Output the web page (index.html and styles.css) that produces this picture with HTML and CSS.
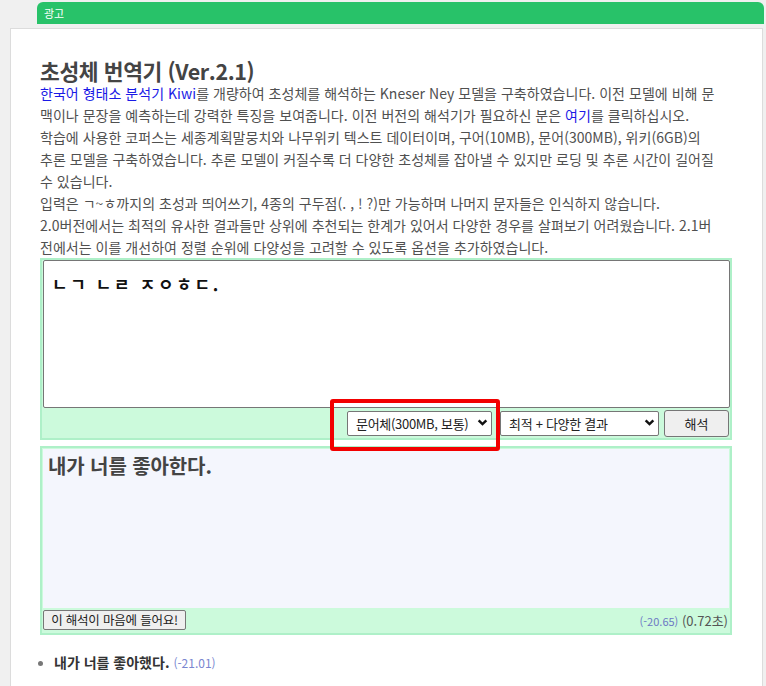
FILE: index.html
```html
<!DOCTYPE html>
<html lang="ko">
<head>
<meta charset="utf-8">
<title>초성체 번역기</title>
<link rel="stylesheet" href="styles.css">
</head>
<body>
<div class="ad">광고</div>
<main class="card">
  <h1 class="title">초성체 번역기 (Ver.2.1)</h1>
  <p class="desc"><a href="#">한국어 형태소 분석기 Kiwi</a>를 개량하여 초성체를 해석하는 Kneser Ney 모델을 구축하였습니다. 이전 모델에 비해 문<br>맥이나 문장을 예측하는데 강력한 특징을 보여줍니다. 이전 버전의 해석기가 필요하신 분은 <a href="#">여기</a>를 클릭하십시오.<br>학습에 사용한 코퍼스는 세종계획말뭉치와 나무위키 텍스트 데이터이며, 구어(10MB), 문어(300MB), 위키(6GB)의<br>추론 모델을 구축하였습니다. 추론 모델이 커질수록 더 다양한 초성체를 잡아낼 수 있지만 로딩 및 추론 시간이 길어질<br>수 있습니다.<br>입력은 ㄱ~ㅎ까지의 초성과 띄어쓰기, 4종의 구두점(. , ! ?)만 가능하며 나머지 문자들은 인식하지 않습니다.<br>2.0버전에서는 최적의 유사한 결과들만 상위에 추천되는 한계가 있어서 다양한 경우를 살펴보기 어려웠습니다. 2.1버<br>전에서는 이를 개선하여 정렬 순위에 다양성을 고려할 수 있도록 옵션을 추가하였습니다.</p>

  <section class="input-box">
    <textarea class="input">ㄴㄱ ㄴㄹ ㅈㅇㅎㄷ.</textarea>
    <div class="controls">
      <div class="select-wrap model">
        <select class="select"><option>문어체(300MB, 보통)</option></select>
        <svg class="chev" viewBox="0 0 10 10" width="11" height="11"><path d="M1.5 3 L5 6.5 L8.5 3" fill="none" stroke="#111" stroke-width="2.2"/></svg>
        <div class="highlight"></div>
      </div>
      <div class="select-wrap mode">
        <select class="select"><option>최적 + 다양한 결과</option></select>
        <svg class="chev" viewBox="0 0 10 10" width="11" height="11"><path d="M1.5 3 L5 6.5 L8.5 3" fill="none" stroke="#111" stroke-width="2.2"/></svg>
      </div>
      <button class="btn run">해석</button>
    </div>
  </section>

  <section class="output-box">
    <div class="output">내가 너를 좋아한다.</div>
    <div class="output-foot">
      <button class="btn like">이 해석이 마음에 들어요!</button>
      <div class="meta"><span class="score">(-20.65)</span> <span class="time">(0.72초)</span></div>
    </div>
  </section>

  <ul class="alts">
    <li><b>내가 너를 좋아했다.</b> <span class="score">(-21.01)</span></li>
  </ul>
</main>
</body>
</html>
```

FILE: styles.css
```css
* { box-sizing: border-box; }
html, body { margin: 0; }
body {
  background: #f0f0f0;
  font-family: "Noto Sans CJK KR", "Noto Sans", sans-serif;
  color: #555;
  overflow: hidden;
}
.ad {
  margin: 2px 2px 0 37px;
  height: 22px;
  background: #28c269;
  border-radius: 6px 6px 0 0;
  color: #fff;
  font-size: 11px;
  line-height: 22px;
  padding-left: 7px;
}
.card {
  margin: 4px 3px 0 10px;
  background: #fff;
  border: 1px solid #dcdcdc;
  padding: 31px 30px 40px 29px;
  min-height: 700px;
}
.title {
  margin: 0;
  font-size: 21.5px;
  line-height: 22px;
  font-weight: 700;
  color: #444;
  letter-spacing: -0.4px;
}
.desc {
  margin: 0;
  font-size: 14px;
  line-height: 22px;
  letter-spacing: 0.03px;
  white-space: nowrap;
  color: #505050;
}
.desc a { color: #1a1ae6; text-decoration: none; }

.input-box {
  background: #ccfadc;
  border: 2px solid #aef0c8;
  padding: 0 0 0 1px;
}
.input {
  display: block;
  width: 100%;
  height: 148px;
  margin: 0;
  border: 1px solid #767676;
  border-radius: 2px;
  padding: 10px 8px;
  resize: none;
  font-family: "Noto Sans CJK KR", sans-serif;
  font-weight: 700;
  font-size: 17px;
  letter-spacing: 2.6px;
  color: #111;
  background: #fff;
}
.controls {
  display: flex;
  justify-content: flex-end;
  align-items: flex-start;
  height: 30px;
  padding: 2px 1px 0 0;
}
.select-wrap { position: relative; }
.select-wrap.model { width: 145px; margin-right: 8px; }
.select-wrap.mode { width: 159px; margin-right: 5px; }
.select {
  appearance: none;
  -webkit-appearance: none;
  width: 100%;
  height: 25px;
  border: 1px solid #767676;
  border-radius: 2px;
  background: #fff;
  font-family: "Noto Sans CJK KR", sans-serif;
  font-size: 13px;
  color: #222;
  padding: 0 0 0 8px;
  letter-spacing: -0.3px;
}
.chev {
  position: absolute;
  right: 4px;
  top: 7px;
  pointer-events: none;
}
.highlight {
  position: absolute;
  left: -17px;
  top: -11px;
  width: 170px;
  height: 52px;
  border: 4px solid #f20000;
  border-radius: 3px;
  pointer-events: none;
}
.btn {
  font-family: "Noto Sans CJK KR", sans-serif;
  background: #efefef;
  border: 1px solid #767676;
  border-radius: 3px;
  color: #222;
  padding: 0;
}
.run { width: 65px; height: 27px; font-size: 13px; }

.output-box {
  margin-top: 6px;
  background: #ccfadc;
  border: 2px solid #aef0c8;
  padding: 1px;
}
.output {
  height: 159px;
  background: #f4f6fd;
  padding: 2px 5px;
  font-size: 20px;
  line-height: 30px;
  font-weight: 700;
  color: #444;
  letter-spacing: -0.1px;
}
.output-foot {
  display: flex;
  justify-content: space-between;
  align-items: center;
  height: 24px;
}
.like {
  height: 20px;
  width: 143px;
  font-size: 12.5px;
  line-height: 18px;
  letter-spacing: -0.2px;
  border-radius: 2px;
}
.meta { font-size: 13px; color: #555; padding-right: 1px; }
.score { font-size: 11px; color: #6d78c4; }
.time { font-size: 13px; color: #555; }

.alts {
  margin: 16px 0 0 0;
  padding: 0 0 0 14px;
  font-size: 14px;
  line-height: 22px;
}
.alts li { color: #555; }
.alts li::marker { color: #777; font-size: 12px; }
.alts b { color: #333; }
.alts .score { font-size: 12px; color: #7a86d0; }
```
